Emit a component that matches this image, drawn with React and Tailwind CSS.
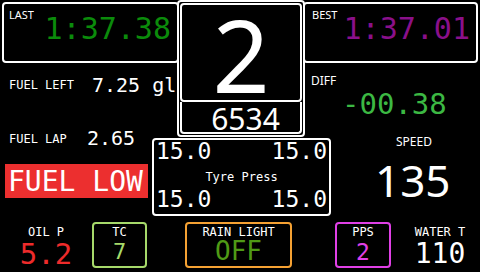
const mono = "font-['DejaVu_Sans_Mono',monospace]";
const sans = "font-['Noto_Sans',sans-serif]";

function SmallBox({ label, value, color, border, width, ml, valueClass }) {
  return (
    <div className={`mt-[5px] flex h-[46px] flex-col items-center rounded-[4px] border-2 ${border} ${width} ${ml}`}>
      <span className="mt-[2px] text-[12px] leading-[12px] text-white">{label}</span>
      <span className={`${valueClass} ${color}`}>{value}</span>
    </div>
  );
}

export default function App() {
  return (
    <div className="grid h-[272px] w-[480px] grid-cols-[152px_25px_128px_26px_149px] grid-rows-[63px_74px_80px_55px] overflow-hidden bg-black text-white">
      {/* last lap */}
      <div className="col-start-1 col-end-3 row-start-1 ml-[2px] mt-[2px] flex h-[61px] w-[177px] items-start justify-between rounded-[4px] border-2 border-white">
        <span className={`${sans} ml-[5px] mt-[5px] text-[11px] leading-[11px]`}>LAST</span>
        <span className={`${mono} mr-[6px] mt-[10px] text-[30px] leading-[30px] text-[#0b8b0b]`}>1:37.38</span>
      </div>

      {/* best lap */}
      <div className="col-start-4 col-end-6 row-start-1 -ml-[2px] mt-[2px] flex h-[61px] w-[175px] items-start justify-between rounded-[4px] border-2 border-white">
        <span className={`${sans} ml-[7px] mt-[5px] text-[11px] leading-[11px]`}>BEST</span>
        <span className={`${mono} mr-[6px] mt-[10px] text-[30px] leading-[30px] text-[#8a108a]`}>1:37.01</span>
      </div>

      {/* gear + rpm */}
      <div className="col-start-3 row-start-1 row-end-3 flex flex-col rounded-[4px] border-2 border-white p-px">
        <div className="flex h-[99px] justify-center rounded-[4px] border-2 border-white">
          <span className={`${sans} mt-[4px] text-[100px] leading-[90px]`}>2</span>
        </div>
        <div className="flex h-[32px] justify-center rounded-b-[4px] border-2 border-t-0 border-white">
          <span className={`${sans} ml-[9px] mt-[3px] text-[30px] leading-[28px]`}>6534</span>
        </div>
      </div>

      {/* fuel */}
      <div className={`${mono} col-start-1 row-start-2 row-end-4 flex flex-col items-start`}>
        <div className="mt-[12px] flex items-start pl-[9px]">
          <span className="mt-[4px] w-[83px] text-[12px] leading-[12px]">FUEL LEFT</span>
          <span className="whitespace-nowrap text-[20px] leading-[20px]">7.25 gl</span>
        </div>
        <div className="mt-[33px] flex items-start pl-[9px]">
          <span className="mt-[5px] w-[78px] text-[12px] leading-[12px]">FUEL LAP</span>
          <span className="text-[20px] leading-[20px]">2.65</span>
        </div>
        <div className="ml-[5px] mt-[16px] h-[34px] w-[143px] bg-[#ec2f2f] pl-[3px] pt-[4px]">
          <span className="block whitespace-nowrap text-[28px] leading-[28px]">FUEL LOW</span>
        </div>
      </div>

      {/* diff + speed */}
      <div className="col-start-4 col-end-6 row-start-2 row-end-4 flex flex-col items-start">
        <span className={`${sans} ml-[6px] mt-[12px] text-[12px] leading-[12px]`}>DIFF</span>
        <span className={`${mono} ml-[37px] mt-[3px] text-[29px] leading-[29px] text-[#3cb843]`}>-00.38</span>
        <span className={`${sans} ml-[91px] mt-[17px] text-[12px] leading-[12px]`}>SPEED</span>
        <span className={`${sans} ml-[70px] mt-[10px] text-[44px] leading-[44px]`}>135</span>
      </div>

      {/* tyres */}
      <div className={`${mono} col-start-2 col-end-5 row-start-3 mt-[1px] flex h-[78px] flex-col rounded-[4px] border-2 border-white`}>
        <div className="flex justify-between px-[2px] text-[23px] leading-[23px]">
          <span>15.0</span>
          <span>15.0</span>
        </div>
        <span className="mt-[8px] text-center text-[12px] leading-[12px]">Tyre Press</span>
        <div className="mt-[5px] flex justify-between px-[2px] text-[23px] leading-[23px]">
          <span>15.0</span>
          <span>15.0</span>
        </div>
      </div>

      {/* bottom strip */}
      <div className={`${mono} col-start-1 col-end-6 row-start-4 flex items-start`}>
        <div className="flex w-[92px] flex-col items-center">
          <span className="mt-[9px] text-[12px] leading-[12px]">OIL P</span>
          <span className="mt-[2px] text-[29px] leading-[29px] text-[#ee2b2b]">5.2</span>
        </div>
        <SmallBox label="TC" value="7" width="w-[55px]" ml="" border="border-[#a6d96a]" color="text-[#a6d96a]" valueClass="mt-[3px] text-[22px] leading-[22px]" />
        <SmallBox label="RAIN LIGHT" value="OFF" width="w-[107px]" ml="ml-[38px]" border="border-[#f5a133]" color="text-[#4f9a16]" valueClass="text-[26px] leading-[26px]" />
        <SmallBox label="PPS" value="2" width="w-[56px]" ml="ml-[43px]" border="border-[#e040e6]" color="text-[#e040e6]" valueClass="mt-[3px] text-[23px] leading-[23px]" />
        <div className="ml-[9px] flex w-[80px] flex-col items-center">
          <span className="mt-[9px] text-[12px] leading-[12px]">WATER T</span>
          <span className="mt-[2px] text-[28px] leading-[28px]">110</span>
        </div>
      </div>
    </div>
  );
}
